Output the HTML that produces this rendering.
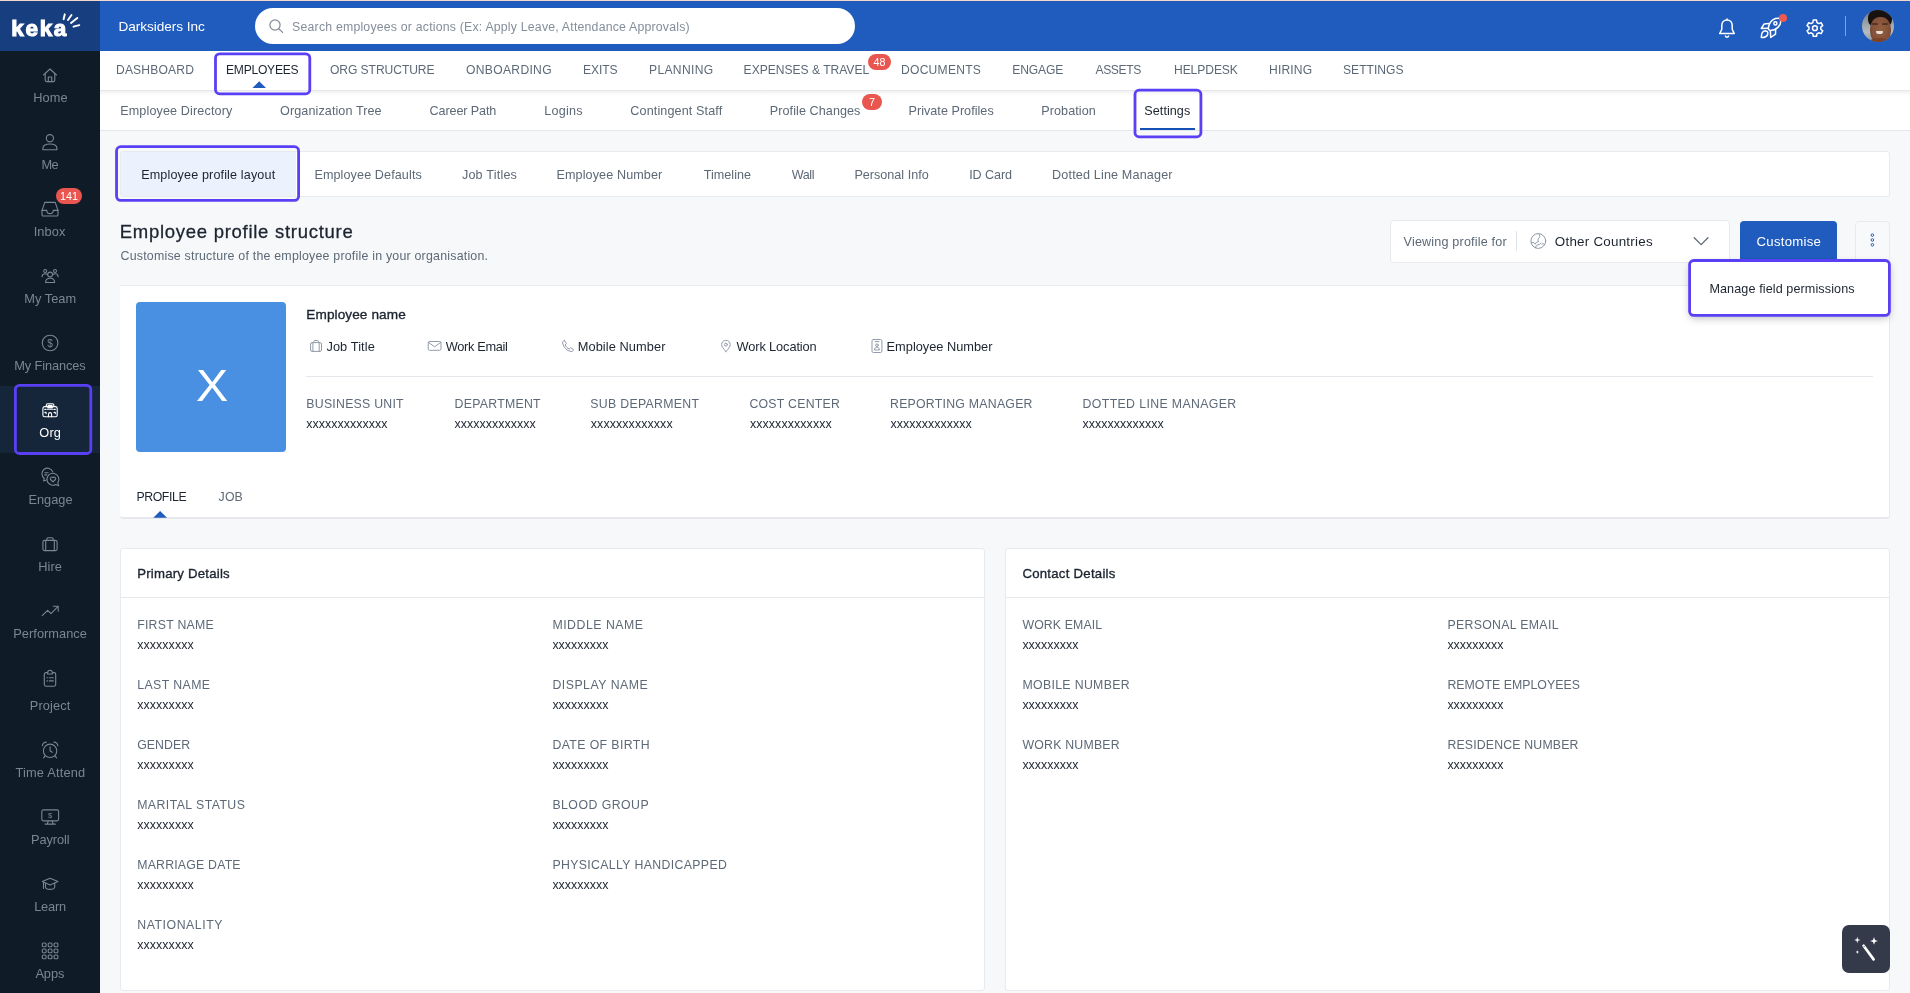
<!DOCTYPE html>
<html lang="en"><head><meta charset="utf-8"><title>Keka - Employee profile structure</title>
<style>
*{box-sizing:border-box;margin:0;padding:0}
html,body{width:1910px;height:993px;overflow:hidden;background:#f7f8fa;font-family:"Liberation Sans",sans-serif}
.a{position:absolute}
.t{position:absolute;white-space:nowrap;line-height:20px;height:20px}
svg{position:absolute;overflow:visible}
.card{position:absolute;background:#fff;border:1px solid #e8eaed}
.ring{position:absolute;border:2.5px solid #5a40f4;border-radius:5.5px}
.badge{position:absolute;background:#e9564f;border-radius:8px;color:#fff;font-size:10.8px;line-height:16px;height:16px;text-align:center;will-change:transform}
.si{fill:none;stroke:#7b8693;stroke-width:1.1;stroke-linecap:round;stroke-linejoin:round}
.wi{fill:none;stroke:#fff;stroke-width:1.5;stroke-linecap:round;stroke-linejoin:round}
.gi{fill:none;stroke:#919aa9;stroke-width:1;stroke-linecap:round;stroke-linejoin:round}
</style></head><body>
<!-- top bar -->
<div class="a" style="left:0;top:0;width:1910px;height:51px;background:#205cbe"></div>
<div class="a" style="left:0;top:0;width:100px;height:51px;background:#173f80"></div>
<div class="a" style="left:0;top:0;width:1910px;height:1px;background:#f3d6cc"></div>
<!-- sidebar -->
<div class="a" style="left:0;top:51px;width:100px;height:942px;background:#101b28"></div>
<div class="a" style="left:0;top:386px;width:100px;height:67px;background:#15263b"></div>
<!-- search -->
<div class="a" style="left:255px;top:8px;width:600px;height:36px;border-radius:18px;background:#fff"></div>
<!-- nav2 -->
<div class="a" style="left:100px;top:90px;width:1810px;height:41px;background:#fff;border-bottom:1px solid #e4e7eb"></div>
<!-- nav1 -->
<div class="a" style="left:100px;top:51px;width:1810px;height:39px;background:#fff"></div>
<div class="a" style="left:100px;top:90px;width:1810px;height:6px;background:linear-gradient(180deg,#e3e4e7 0,#e9eaec 16%,#f1f1f2 17%,#f5f5f6 40%,#f9f9f9 60%,#fcfcfc 80%,#fff 100%)"></div>
<!-- tabs card -->
<div class="card" style="left:120px;top:151px;width:1770px;height:46px;border-radius:3px"></div>
<div class="a" style="left:121px;top:152px;width:174.5px;height:44px;background:#ebf2fd"></div>
<!-- select -->
<div class="card" style="left:1390px;top:220px;width:340px;height:43px;border-radius:4px"></div>
<div class="a" style="left:1516px;top:231px;width:1px;height:20px;background:#e1e4e9"></div>
<!-- customise -->
<div class="a" style="left:1740px;top:221px;width:97px;height:41px;background:#205cbe;border-radius:4px"></div>
<!-- more btn -->
<div class="a" style="left:1855px;top:221px;width:35px;height:41px;border:1px solid #e8eaed;border-radius:4px;background:#f8f9fb"></div>
<!-- profile card -->
<div class="card" style="left:120px;top:285px;width:1770px;height:234px;border-left:0;border-bottom:2px solid #e6e8eb;border-radius:0 0 3px 3px"></div>
<div class="a" style="left:136px;top:302px;width:150px;height:150px;background:#4990e2;border-radius:4px"></div>
<div class="a" style="left:306px;top:376px;width:1567px;height:1px;background:#e4e7eb"></div>
<!-- details cards -->
<div class="card" style="left:120px;top:548px;width:865px;height:443px;border-radius:3px"></div>
<div class="a" style="left:121px;top:597px;width:863px;height:1px;background:#e6e8ec"></div>
<div class="card" style="left:1005px;top:548px;width:885px;height:443px;border-radius:3px"></div>
<div class="a" style="left:1006px;top:597px;width:883px;height:1px;background:#e6e8ec"></div>
<!-- popup -->
<div class="a" style="left:1690px;top:261px;width:199px;height:54px;background:#fff;border-radius:4px;box-shadow:0 3px 9px rgba(0,0,0,.28)"></div>
<!-- badges -->
<div class="badge" style="left:56px;top:188px;width:26px">141</div>
<div class="badge" style="left:867.5px;top:54px;width:23px">48</div>
<div class="badge" style="left:862px;top:94px;width:20px">7</div>
<!-- magic button -->
<div class="a" style="left:1842px;top:925px;width:48px;height:48px;background:#343a4a;border-radius:7px"></div>
<!-- settings underline -->
<div class="a" style="left:1140px;top:128px;width:55px;height:2px;background:#1450b5"></div>
<!--ICONS-->
<svg class="a" style="left:0;top:0;will-change:transform" width="1910" height="993" viewBox="0 0 1910 993">
<!-- logo rays -->
<g stroke="#fff" stroke-width="1.9" stroke-linecap="round" fill="none">
<path d="M64.8 14.3 L63.6 19.2"/><path d="M71.5 15 L68 20"/><path d="M77.3 17.9 L71 22.9"/><path d="M79.3 25.2 L73.5 26.7"/>
</g>
<!-- search icon -->
<g fill="none" stroke="#7f8995" stroke-width="1.2" stroke-linecap="round"><circle cx="275" cy="25" r="5.1"/><path d="M278.8 28.8 L282.6 32.4"/></g>
<!-- nav triangles -->
<path d="M252.4 88 L259.2 81.2 L266 88 Z" fill="#205cbe"/>
<path d="M153.3 517.8 L160.1 511 L167 517.8 Z" fill="#205cbe"/>
<!-- sidebar icons -->
<g class="si" transform="translate(43,68.4)"><path d="M0.5 6.6 L7 0.6 L13.5 6.6"/><path d="M2.2 5.4 V11.7 a1.5 1.5 0 0 0 1.5 1.5 H10.3 a1.5 1.5 0 0 0 1.5 -1.5 V5.4"/><path d="M5.3 13.2 V8.6 H8.7 V13.2"/></g>
<g class="si" transform="translate(42.3,134)"><circle cx="7.6" cy="4.2" r="3.6"/><path d="M0.6 15.8 v-1.4 c0-3 3-4.4 7-4.4 s7 1.4 7 4.4 v1.4 z"/></g>
<g class="si" transform="translate(41.4,201.8)"><path d="M0.6 8.6 L3.4 0.6 H13.8 L16.6 8.6 V13 a1.2 1.2 0 0 1 -1.2 1.2 H1.8 a1.2 1.2 0 0 1 -1.2 -1.2 Z"/><path d="M0.6 8.6 H5.4 a3.2 3.2 0 0 0 6.4 0 H16.6"/></g>
<g class="si" transform="translate(41.6,268.7)" stroke-width="0.95"><circle cx="8.5" cy="5.8" r="2.4"/><path d="M4 13.8 c0-2.9 2-4.2 4.5-4.2 s4.5 1.3 4.5 4.2 z"/><circle cx="3.6" cy="2.3" r="1.5"/><path d="M0.5 8 c0-1.9 1.2-3 3-3 c0.8 0 1.4 .2 1.9 .6"/><circle cx="13.4" cy="2.3" r="1.5"/><path d="M16.5 8 c0-1.9 -1.2-3 -3-3 c-0.8 0 -1.4 .2 -1.9 .6"/></g>
<g class="si" transform="translate(41.6,334.7)"><circle cx="8.5" cy="8.3" r="7.8"/></g>
<g class="si" transform="translate(42.3,403)" style="stroke:#fff" stroke-width="1"><rect x="0.6" y="3.6" width="14.3" height="10.2" rx="1.8"/><path d="M4 3.6 V2 a1.3 1.3 0 0 1 1.3-1.3 h4.9 a1.3 1.3 0 0 1 1.3 1.3 V3.6"/><path d="M5.8 2.4 H9.7 M5.4 4.6 H10.1 M5 6.2 H10.5"/><path d="M6.2 13.8 V11.2 a1.55 1.55 0 0 1 3.1 0 V13.8"/><path d="M2.5 6.4 h1.3 M2.5 9.4 h1.3 v1.2 M11.7 6.4 h1.3 M11.7 9.4 h1.3 v1.2"/></g>
<g class="si" transform="translate(41.2,468.3)" stroke-width="1"><path d="M5.2 11.6 L2.4 12.6 L3 10 A5.6 5.6 0 1 1 11.6 3.6"/><path d="M3.6 4.4 H7 M3.6 6.6 H5.6"/><path d="M14.6 16.2 L17.4 17.4 L16.6 14.4 A6 6 0 1 0 14.6 16.2 Z"/><path d="M11.8 13.6 L9.4 11.2 a1.5 1.5 0 0 1 2.4-1.8 a1.5 1.5 0 0 1 2.4 1.8 Z"/></g>
<g class="si" transform="translate(42.3,537)"><rect x="0.6" y="3.4" width="14.2" height="10.2" rx="1.6"/><path d="M4.6 3.4 V1.7 a1 1 0 0 1 1-1 h4.2 a1 1 0 0 1 1 1 V3.4"/><path d="M3.4 3.6 V13.4 M12 3.6 V13.4"/></g>
<g class="si" transform="translate(41.6,605.5)"><path d="M0.6 10.2 L6 4.8 L9.4 8.2 L16.2 1.2"/><path d="M11.6 0.8 H16.6 V5.8"/></g>
<g class="si" transform="translate(43.3,669.8)"><rect x="1" y="2.8" width="11.4" height="13.6" rx="1.6"/><path d="M4.4 4.2 V2.6 a2.3 2.1 0 0 1 4.6 0 V4.2 Z" fill="#101b28"/><path d="M3.6 8 H4.1 M6 8 H10 M3.6 11.1 H4.1 M6 11.1 H10"/></g>
<g class="si" transform="translate(41.6,741.3)"><circle cx="8.5" cy="9.5" r="6.7"/><path d="M8.5 5.6 V9.8 L10.8 11"/><path d="M0.8 4.4 A3.6 3.6 0 0 1 4.8 0.9"/><path d="M12.2 0.9 A3.6 3.6 0 0 1 16.2 4.4"/><path d="M3.6 14.6 L2 16.6 M13.4 14.6 L15 16.6"/></g>
<g class="si" transform="translate(41.2,809.3)"><rect x="0.6" y="0.6" width="16.8" height="11" rx="1.6"/><path d="M7 11.6 L6.2 14.4 M11 11.6 L11.8 14.4 M3.8 14.8 H14.2"/></g>
<g class="si" transform="translate(41.7,877.6)" stroke-width="1"><path d="M0.6 4 L8.4 0.6 L16.2 4 L8.4 7.4 Z"/><path d="M3.8 5.6 V9.4 c0 1.4 2 2.4 4.6 2.4 s4.6-1 4.6-2.4 V5.6"/><path d="M1.8 4.8 V10.8"/></g>
<g class="si" transform="translate(41.7,942.4)"><rect x="0.6" y="0.6" width="3.8" height="3.8" rx="1.1"/><rect x="6.5" y="0.6" width="3.8" height="3.8" rx="1.1"/><rect x="12.4" y="0.6" width="3.8" height="3.8" rx="1.1"/><rect x="0.6" y="6.6" width="3.8" height="3.8" rx="1.1"/><rect x="6.5" y="6.6" width="3.8" height="3.8" rx="1.1"/><rect x="12.4" y="6.6" width="3.8" height="3.8" rx="1.1"/><rect x="0.6" y="12.6" width="3.8" height="3.8" rx="1.1"/><rect x="6.5" y="12.6" width="3.8" height="3.8" rx="1.1"/><rect x="12.4" y="12.6" width="3.8" height="3.8" rx="1.1"/></g>
<text x="50.1" y="346.6" font-family="Liberation Sans, sans-serif" font-size="10" fill="#7b8693" text-anchor="middle">$</text>
<text x="50.2" y="818.4" font-family="Liberation Sans, sans-serif" font-size="7.5" fill="#7b8693" text-anchor="middle">$</text>
<!-- top right icons -->
<g class="wi" transform="translate(1718.8,18.2)"><path d="M8.2 1.8 c-3.1 0-5.2 2.4-5.2 5.6 v3.6 L0.9 15.4 h14.6 L13.4 11 v-3.6 c0-3.2-2.1-5.6-5.2-5.6z"/><path d="M8.2 0.7 V1.6"/><path d="M6.6 17.9 a1.7 1.7 0 0 0 3.2 0"/></g>
<g class="wi" stroke-width="1.45"><path d="M1779.9 18.4 C1775.5 17.9 1771.6 19.9 1769.7 23.6 C1768.6 25.6 1768.3 27.6 1768.5 29.2 L1769.9 30.5 C1772.6 30.6 1775.6 29.6 1777.9 27.4 C1780.6 24.9 1781.4 21.6 1779.9 18.4 Z"/><circle cx="1775.4" cy="23.4" r="1.55"/><path d="M1768.8 23.5 L1764.2 23.9 L1761.3 28.5 L1767.7 28.2"/><path d="M1770.4 31 L1770.7 37.5 L1775.5 34.2 L1775.6 29.8"/><path d="M1761.3 37.5 C1761.3 33.6 1763 30.8 1765.4 30.7 C1767.4 30.7 1768.2 32.6 1767.6 34.6 C1766.8 36.6 1764.4 37.6 1761.3 37.5 Z"/></g>
<g class="wi" transform="translate(1814.9,28.2)" stroke-width="1.45"><circle r="2.4"/><path d="M2.05 -5.64 L1.64 -8.08 L-1.64 -8.08 L-2.05 -5.64 L-3.86 -4.60 L-6.18 -5.47 L-7.82 -2.62 L-5.91 -1.04 L-5.91 1.04 L-7.82 2.62 L-6.18 5.47 L-3.86 4.60 L-2.05 5.64 L-1.64 8.08 L1.64 8.08 L2.05 5.64 L3.86 4.60 L6.18 5.47 L7.82 2.62 L5.91 1.04 L5.91 -1.04 L7.82 -2.62 L6.18 -5.47 L3.86 -4.60 Z"/></g>
<circle cx="1783" cy="18" r="4" fill="#ee5a52"/>
<path d="M1845.5 16 V36" stroke="#7fa0dd" stroke-width="1"/>
<!-- info icons -->
<g class="gi" transform="translate(310.1,340)"><rect x="0.5" y="2.6" width="10.9" height="8.8" rx="1.4"/><path d="M3.8 2.6 V1.4 a.9 .9 0 0 1 .9-.9 h2.8 a.9 .9 0 0 1 .9 .9 V2.6"/><path d="M2.8 2.8 V11.2 M9.1 2.8 V11.2"/></g>
<g class="gi" transform="translate(427.7,341)"><rect x="0.5" y="0.5" width="12.8" height="8.8" rx="1.4"/><path d="M0.8 1.4 L6.9 5.8 L13 1.4"/></g>
<g class="gi" transform="translate(562,340)"><path d="M2.6 0.6 L4.4 3.6 L3.2 5 C4 6.8 5.4 8.2 7.2 9 L8.6 7.8 L11.5 9.6 C11.3 11 10.2 11.7 9 11.5 C4.6 10.6 1.5 7.5 0.6 3 C0.4 1.8 1.2 .8 2.6 .6 Z"/></g>
<g class="gi" transform="translate(721,340)"><path d="M4.9 11.6 C2 8.4 0.6 6.4 0.6 4.6 a4.3 4.3 0 0 1 8.6 0 C9.2 6.4 7.8 8.4 4.9 11.6 Z"/><circle cx="4.9" cy="4.6" r="1.5"/></g>
<g class="gi" transform="translate(871.5,339)"><rect x="0.5" y="0.5" width="9.9" height="13" rx="1.4"/><path d="M3.6 2.6 H7.4"/><circle cx="5.45" cy="6.2" r="1.3"/><path d="M3 10.6 c0-1.6 1-2.4 2.45-2.4 s2.45 .8 2.45 2.4 z"/></g>
<!-- globe -->
<g class="gi" transform="translate(1538.3,241)" style="stroke:#8b95a3"><circle r="7.4"/><path d="M-6.6 1.6 c2-.4 2.8 .4 3.6 1.6 c.6-1.8 1.8-2.6 3.2-2.4 c-1-1.4-.6-3 1-4.4 c.6-1 .2-2.4 -.6-3.4"/><path d="M-2.8 6.6 c.2-1.4 1-2.4 2.4-2.8 c1.4-.2 2.4-.6 3 -1.800"/><path d="M3.6 3 c1-.4 1.8-.2 2.6 .4"/></g>
<!-- chevron -->
<path d="M1694.2 237.8 L1701.1 244.6 L1708 237.8" fill="none" stroke="#5d6977" stroke-width="1.3" stroke-linecap="round" stroke-linejoin="round"/>
<!-- dots -->
<g fill="none" stroke="#205cbe" stroke-width="1"><circle cx="1872.4" cy="235.1" r="1.3"/><circle cx="1872.4" cy="239.95" r="1.3"/><circle cx="1872.4" cy="244.8" r="1.3"/></g>
<!-- wand -->
<g fill="#fff" stroke="none"><path d="M1863.6 945.8 L1873.6 959.4" stroke="#fff" stroke-width="2.7" stroke-linecap="round"/><path d="M1874.0 937.1 l1.00 2.80 l2.80 1.00 l-2.80 1.00 l-1.00 2.80 l-1.00 -2.80 l-2.80 -1.00 l2.80 -1.00 z"/><path d="M1857.3 936.8 l0.70 2.50 l2.50 0.70 l-2.50 0.70 l-0.70 2.50 l-0.70 -2.50 l-2.50 -0.70 l2.50 -0.70 z"/><path d="M1857.3 950.3 l0.50 1.30 l1.30 0.50 l-1.30 0.50 l-0.50 1.30 l-0.50 -1.30 l-1.30 -0.50 l1.30 -0.50 z"/><circle cx="1864.1" cy="946.5" r="0.55" fill="#353b4b"/></g>
</svg>
<!-- avatar -->
<div class="a" style="left:1862px;top:10px;width:32px;height:32px;border-radius:50%;overflow:hidden;background:linear-gradient(180deg,#6f767c 0%,#9aa2a8 40%,#b4bcc1 70%,#8d9499 100%)">
 <div class="a" style="left:6px;top:-2px;width:24px;height:20px;border-radius:50% 50% 40% 40%;background:#17120f"></div>
 <div class="a" style="left:7.5px;top:6.5px;width:21px;height:27px;border-radius:45% 45% 48% 48%;background:radial-gradient(ellipse at 50% 45%,#93603f 0%,#84523a 55%,#5e3726 100%)"></div>
 <div class="a" style="left:10px;top:12.6px;width:6px;height:2px;border-radius:1px;background:#4a2c1f;opacity:.8"></div>
 <div class="a" style="left:19.5px;top:12.6px;width:6px;height:2px;border-radius:1px;background:#4a2c1f;opacity:.8"></div>
 <div class="a" style="left:14px;top:21.4px;width:7px;height:2.8px;border-radius:1px 1px 5px 5px;background:#e9ddd6"></div>
 <div class="a" style="left:6px;top:27.5px;width:24px;height:10px;border-radius:50% 50% 0 0;background:#7a4229"></div>
</div>
<div class="a" style="left:0;top:0;width:1910px;height:993px;will-change:transform"><span class="t" id="t0" style="left:11.2px;top:19.00px;font-size:22.5px;color:#fff;font-weight:700;letter-spacing:1.713px;-webkit-text-stroke:1.1px #fff;">keka</span>
<span class="t" id="t1" style="left:118.4px;top:17.00px;font-size:13.6px;color:#fff;letter-spacing:-0.044px;">Darksiders Inc</span>
<span class="t" id="t2" style="left:292.1px;top:17.00px;font-size:12.3px;color:#848e9b;letter-spacing:0.203px;">Search employees or actions (Ex: Apply Leave, Attendance Approvals)</span>
<span class="t" id="t3" style="left:116.0px;top:60.00px;font-size:12.1px;color:#5d6977;letter-spacing:0.161px;">DASHBOARD</span>
<span class="t" id="t4" style="left:226.0px;top:60.00px;font-size:12.1px;color:#1c2430;letter-spacing:-0.251px;">EMPLOYEES</span>
<span class="t" id="t5" style="left:330.0px;top:60.00px;font-size:12.1px;color:#5d6977;letter-spacing:-0.074px;">ORG STRUCTURE</span>
<span class="t" id="t6" style="left:466.0px;top:60.00px;font-size:12.1px;color:#5d6977;letter-spacing:0.327px;">ONBOARDING</span>
<span class="t" id="t7" style="left:583.0px;top:60.00px;font-size:12.1px;color:#5d6977;letter-spacing:-0.088px;">EXITS</span>
<span class="t" id="t8" style="left:649.0px;top:60.00px;font-size:12.1px;color:#5d6977;letter-spacing:0.325px;">PLANNING</span>
<span class="t" id="t9" style="left:743.6px;top:60.00px;font-size:12.1px;color:#5d6977;letter-spacing:-0.020px;">EXPENSES &amp; TRAVEL</span>
<span class="t" id="t10" style="left:901.0px;top:60.00px;font-size:12.1px;color:#5d6977;letter-spacing:0.245px;">DOCUMENTS</span>
<span class="t" id="t11" style="left:1012.2px;top:60.00px;font-size:12.1px;color:#5d6977;letter-spacing:-0.100px;">ENGAGE</span>
<span class="t" id="t12" style="left:1095.5px;top:60.00px;font-size:12.1px;color:#5d6977;letter-spacing:-0.382px;">ASSETS</span>
<span class="t" id="t13" style="left:1174.0px;top:60.00px;font-size:12.1px;color:#5d6977;letter-spacing:-0.090px;">HELPDESK</span>
<span class="t" id="t14" style="left:1269.0px;top:60.00px;font-size:12.1px;color:#5d6977;letter-spacing:0.154px;">HIRING</span>
<span class="t" id="t15" style="left:1343.0px;top:60.00px;font-size:12.1px;color:#5d6977;letter-spacing:0.017px;">SETTINGS</span>
<span class="t" id="t16" style="left:120.2px;top:101.00px;font-size:12.6px;color:#5d6977;letter-spacing:0.131px;">Employee Directory</span>
<span class="t" id="t17" style="left:280.1px;top:101.00px;font-size:12.6px;color:#5d6977;letter-spacing:0.087px;">Organization Tree</span>
<span class="t" id="t18" style="left:429.6px;top:101.00px;font-size:12.6px;color:#5d6977;letter-spacing:-0.116px;">Career Path</span>
<span class="t" id="t19" style="left:544.3px;top:101.00px;font-size:12.6px;color:#5d6977;letter-spacing:0.206px;">Logins</span>
<span class="t" id="t20" style="left:630.3px;top:101.00px;font-size:12.6px;color:#5d6977;letter-spacing:0.123px;">Contingent Staff</span>
<span class="t" id="t21" style="left:769.8px;top:101.00px;font-size:12.6px;color:#5d6977;letter-spacing:0.071px;">Profile Changes</span>
<span class="t" id="t22" style="left:908.5px;top:101.00px;font-size:12.6px;color:#5d6977;letter-spacing:0.033px;">Private Profiles</span>
<span class="t" id="t23" style="left:1041.3px;top:101.00px;font-size:12.6px;color:#5d6977;letter-spacing:0.071px;">Probation</span>
<span class="t" id="t24" style="left:1144.3px;top:101.00px;font-size:12.6px;color:#1c2430;letter-spacing:0.060px;">Settings</span>
<span class="t" id="t25" style="left:141.2px;top:165.00px;font-size:12.6px;color:#1c2430;letter-spacing:0.138px;">Employee profile layout</span>
<span class="t" id="t26" style="left:314.4px;top:165.00px;font-size:12.6px;color:#5d6977;letter-spacing:0.106px;">Employee Defaults</span>
<span class="t" id="t27" style="left:461.9px;top:165.00px;font-size:12.6px;color:#5d6977;letter-spacing:0.200px;">Job Titles</span>
<span class="t" id="t28" style="left:556.5px;top:165.00px;font-size:12.6px;color:#5d6977;letter-spacing:0.104px;">Employee Number</span>
<span class="t" id="t29" style="left:703.7px;top:165.00px;font-size:12.6px;color:#5d6977;letter-spacing:0.036px;">Timeline</span>
<span class="t" id="t30" style="left:791.7px;top:165.00px;font-size:12.6px;color:#5d6977;letter-spacing:-0.402px;">Wall</span>
<span class="t" id="t31" style="left:854.4px;top:165.00px;font-size:12.6px;color:#5d6977;letter-spacing:0.007px;">Personal Info</span>
<span class="t" id="t32" style="left:969.2px;top:165.00px;font-size:12.6px;color:#5d6977;letter-spacing:-0.082px;">ID Card</span>
<span class="t" id="t33" style="left:1052.1px;top:165.00px;font-size:12.6px;color:#5d6977;letter-spacing:0.154px;">Dotted Line Manager</span>
<span class="t" id="t34" style="left:119.7px;top:222.00px;font-size:18.5px;color:#1c2430;letter-spacing:0.727px;-webkit-text-stroke:0.3px #1c2430;">Employee profile structure</span>
<span class="t" id="t35" style="left:120.5px;top:246.00px;font-size:12.4px;color:#5d6977;letter-spacing:0.211px;">Customise structure of the employee profile in your organisation.</span>
<span class="t" id="t36" style="left:1403.6px;top:232.00px;font-size:12.6px;color:#5d6977;letter-spacing:0.173px;">Viewing profile for</span>
<span class="t" id="t37" style="left:1554.8px;top:232.00px;font-size:13.4px;color:#1c2430;letter-spacing:0.233px;">Other Countries</span>
<span class="t" id="t38" style="left:1756.5px;top:232.00px;font-size:13.2px;color:#fff;letter-spacing:0.263px;">Customise</span>
<span class="t" id="t39" style="left:1709.4px;top:279.00px;font-size:12.6px;color:#1c2430;letter-spacing:0.104px;">Manage field permissions</span>
<span class="t" id="t40" style="left:196.3px;top:376.00px;font-size:43.9px;color:#fff;letter-spacing:0.000px;transform:scaleX(1.1);transform-origin:0 0;">X</span>
<span class="t" id="t41" style="left:306.3px;top:305.00px;font-size:13.6px;color:#1c2430;letter-spacing:0.097px;-webkit-text-stroke:0.35px #1c2430;">Employee name</span>
<span class="t" id="t42" style="left:326.4px;top:337.00px;font-size:12.8px;color:#1c2430;letter-spacing:0.091px;">Job Title</span>
<span class="t" id="t43" style="left:445.7px;top:337.00px;font-size:12.8px;color:#1c2430;letter-spacing:-0.334px;">Work Email</span>
<span class="t" id="t44" style="left:577.7px;top:337.00px;font-size:12.8px;color:#1c2430;letter-spacing:0.085px;">Mobile Number</span>
<span class="t" id="t45" style="left:736.5px;top:337.00px;font-size:12.8px;color:#1c2430;letter-spacing:-0.114px;">Work Location</span>
<span class="t" id="t46" style="left:886.6px;top:337.00px;font-size:12.8px;color:#1c2430;letter-spacing:-0.009px;">Employee Number</span>
<span class="t" id="t47" style="left:306.3px;top:394.00px;font-size:12.3px;color:#5d6977;letter-spacing:0.251px;">BUSINESS UNIT</span>
<span class="t" id="t48" style="left:306.3px;top:414.00px;font-size:12.4px;color:#1c2430;letter-spacing:0.048px;">xxxxxxxxxxxxx</span>
<span class="t" id="t49" style="left:454.6px;top:394.00px;font-size:12.3px;color:#5d6977;letter-spacing:0.267px;">DEPARTMENT</span>
<span class="t" id="t50" style="left:454.6px;top:414.00px;font-size:12.4px;color:#1c2430;letter-spacing:0.048px;">xxxxxxxxxxxxx</span>
<span class="t" id="t51" style="left:590.3px;top:394.00px;font-size:12.3px;color:#5d6977;letter-spacing:0.308px;">SUB DEPARMENT</span>
<span class="t" id="t52" style="left:590.8px;top:414.00px;font-size:12.4px;color:#1c2430;letter-spacing:0.104px;">xxxxxxxxxxxxx</span>
<span class="t" id="t53" style="left:749.4px;top:394.00px;font-size:12.3px;color:#5d6977;letter-spacing:0.258px;">COST CENTER</span>
<span class="t" id="t54" style="left:749.9px;top:414.00px;font-size:12.4px;color:#1c2430;letter-spacing:0.104px;">xxxxxxxxxxxxx</span>
<span class="t" id="t55" style="left:890.0px;top:394.00px;font-size:12.3px;color:#5d6977;letter-spacing:0.251px;">REPORTING MANAGER</span>
<span class="t" id="t56" style="left:890.5px;top:414.00px;font-size:12.4px;color:#1c2430;letter-spacing:0.048px;">xxxxxxxxxxxxx</span>
<span class="t" id="t57" style="left:1082.6px;top:394.00px;font-size:12.3px;color:#5d6977;letter-spacing:0.372px;">DOTTED LINE MANAGER</span>
<span class="t" id="t58" style="left:1082.6px;top:414.00px;font-size:12.4px;color:#1c2430;letter-spacing:0.048px;">xxxxxxxxxxxxx</span>
<span class="t" id="t59" style="left:136.4px;top:487.00px;font-size:12.3px;color:#1c2430;letter-spacing:-0.404px;">PROFILE</span>
<span class="t" id="t60" style="left:218.6px;top:487.00px;font-size:12.3px;color:#5d6977;letter-spacing:0.139px;">JOB</span>
<span class="t" id="t61" style="left:137.2px;top:564.00px;font-size:13.2px;color:#1c2430;letter-spacing:0.220px;-webkit-text-stroke:0.35px #1c2430;">Primary Details</span>
<span class="t" id="t62" style="left:1022.4px;top:564.00px;font-size:13.2px;color:#1c2430;letter-spacing:0.254px;-webkit-text-stroke:0.35px #1c2430;">Contact Details</span>
<span class="t" id="t63" style="left:137.2px;top:615.00px;font-size:12.3px;color:#5d6977;letter-spacing:0.249px;">FIRST NAME</span>
<span class="t" id="t64" style="left:137.2px;top:635.00px;font-size:12.4px;color:#1c2430;letter-spacing:0.091px;">xxxxxxxxx</span>
<span class="t" id="t65" style="left:137.2px;top:675.00px;font-size:12.3px;color:#5d6977;letter-spacing:0.422px;">LAST NAME</span>
<span class="t" id="t66" style="left:137.2px;top:695.00px;font-size:12.4px;color:#1c2430;letter-spacing:0.091px;">xxxxxxxxx</span>
<span class="t" id="t67" style="left:137.2px;top:735.00px;font-size:12.3px;color:#5d6977;letter-spacing:0.055px;">GENDER</span>
<span class="t" id="t68" style="left:137.2px;top:755.00px;font-size:12.4px;color:#1c2430;letter-spacing:0.091px;">xxxxxxxxx</span>
<span class="t" id="t69" style="left:137.2px;top:795.00px;font-size:12.3px;color:#5d6977;letter-spacing:0.434px;">MARITAL STATUS</span>
<span class="t" id="t70" style="left:137.2px;top:815.00px;font-size:12.4px;color:#1c2430;letter-spacing:0.091px;">xxxxxxxxx</span>
<span class="t" id="t71" style="left:137.2px;top:855.00px;font-size:12.3px;color:#5d6977;letter-spacing:0.208px;">MARRIAGE DATE</span>
<span class="t" id="t72" style="left:137.2px;top:875.00px;font-size:12.4px;color:#1c2430;letter-spacing:0.091px;">xxxxxxxxx</span>
<span class="t" id="t73" style="left:137.2px;top:915.00px;font-size:12.3px;color:#5d6977;letter-spacing:0.559px;">NATIONALITY</span>
<span class="t" id="t74" style="left:137.2px;top:935.00px;font-size:12.4px;color:#1c2430;letter-spacing:0.091px;">xxxxxxxxx</span>
<span class="t" id="t75" style="left:552.4px;top:615.00px;font-size:12.3px;color:#5d6977;letter-spacing:0.519px;">MIDDLE NAME</span>
<span class="t" id="t76" style="left:552.4px;top:635.00px;font-size:12.4px;color:#1c2430;letter-spacing:0.027px;">xxxxxxxxx</span>
<span class="t" id="t77" style="left:552.4px;top:675.00px;font-size:12.3px;color:#5d6977;letter-spacing:0.503px;">DISPLAY NAME</span>
<span class="t" id="t78" style="left:552.4px;top:695.00px;font-size:12.4px;color:#1c2430;letter-spacing:0.027px;">xxxxxxxxx</span>
<span class="t" id="t79" style="left:552.4px;top:735.00px;font-size:12.3px;color:#5d6977;letter-spacing:0.394px;">DATE OF BIRTH</span>
<span class="t" id="t80" style="left:552.4px;top:755.00px;font-size:12.4px;color:#1c2430;letter-spacing:0.027px;">xxxxxxxxx</span>
<span class="t" id="t81" style="left:552.4px;top:795.00px;font-size:12.3px;color:#5d6977;letter-spacing:0.464px;">BLOOD GROUP</span>
<span class="t" id="t82" style="left:552.4px;top:815.00px;font-size:12.4px;color:#1c2430;letter-spacing:0.027px;">xxxxxxxxx</span>
<span class="t" id="t83" style="left:552.4px;top:855.00px;font-size:12.3px;color:#5d6977;letter-spacing:0.357px;">PHYSICALLY HANDICAPPED</span>
<span class="t" id="t84" style="left:552.4px;top:875.00px;font-size:12.4px;color:#1c2430;letter-spacing:0.027px;">xxxxxxxxx</span>
<span class="t" id="t85" style="left:1022.4px;top:615.00px;font-size:12.3px;color:#5d6977;letter-spacing:0.130px;">WORK EMAIL</span>
<span class="t" id="t86" style="left:1022.4px;top:635.00px;font-size:12.4px;color:#1c2430;letter-spacing:0.027px;">xxxxxxxxx</span>
<span class="t" id="t87" style="left:1022.4px;top:675.00px;font-size:12.3px;color:#5d6977;letter-spacing:0.343px;">MOBILE NUMBER</span>
<span class="t" id="t88" style="left:1022.4px;top:695.00px;font-size:12.4px;color:#1c2430;letter-spacing:0.027px;">xxxxxxxxx</span>
<span class="t" id="t89" style="left:1022.4px;top:735.00px;font-size:12.3px;color:#5d6977;letter-spacing:0.233px;">WORK NUMBER</span>
<span class="t" id="t90" style="left:1022.4px;top:755.00px;font-size:12.4px;color:#1c2430;letter-spacing:0.027px;">xxxxxxxxx</span>
<span class="t" id="t91" style="left:1447.4px;top:615.00px;font-size:12.3px;color:#5d6977;letter-spacing:0.327px;">PERSONAL EMAIL</span>
<span class="t" id="t92" style="left:1447.4px;top:635.00px;font-size:12.4px;color:#1c2430;letter-spacing:0.027px;">xxxxxxxxx</span>
<span class="t" id="t93" style="left:1447.4px;top:675.00px;font-size:12.3px;color:#5d6977;letter-spacing:0.040px;">REMOTE EMPLOYEES</span>
<span class="t" id="t94" style="left:1447.4px;top:695.00px;font-size:12.4px;color:#1c2430;letter-spacing:0.027px;">xxxxxxxxx</span>
<span class="t" id="t95" style="left:1447.4px;top:735.00px;font-size:12.3px;color:#5d6977;letter-spacing:0.176px;">RESIDENCE NUMBER</span>
<span class="t" id="t96" style="left:1447.4px;top:755.00px;font-size:12.4px;color:#1c2430;letter-spacing:0.027px;">xxxxxxxxx</span>
<span class="t" id="t97" style="left:33.2px;top:88.00px;font-size:12.8px;color:#7b8693;letter-spacing:0.086px;">Home</span>
<span class="t" id="t98" style="left:41.4px;top:155.00px;font-size:12.8px;color:#7b8693;letter-spacing:-0.661px;">Me</span>
<span class="t" id="t99" style="left:33.7px;top:222.00px;font-size:12.8px;color:#7b8693;letter-spacing:0.072px;">Inbox</span>
<span class="t" id="t100" style="left:24.3px;top:289.00px;font-size:12.8px;color:#7b8693;letter-spacing:0.019px;">My Team</span>
<span class="t" id="t101" style="left:14.2px;top:356.00px;font-size:12.8px;color:#7b8693;letter-spacing:-0.103px;">My Finances</span>
<span class="t" id="t102" style="left:39.3px;top:423.00px;font-size:12.8px;color:#fff;letter-spacing:0.178px;">Org</span>
<span class="t" id="t103" style="left:28.5px;top:490.00px;font-size:12.8px;color:#7b8693;letter-spacing:-0.025px;">Engage</span>
<span class="t" id="t104" style="left:38.3px;top:557.00px;font-size:12.8px;color:#7b8693;letter-spacing:0.007px;">Hire</span>
<span class="t" id="t105" style="left:13.3px;top:624.00px;font-size:12.8px;color:#7b8693;letter-spacing:0.033px;">Performance</span>
<span class="t" id="t106" style="left:29.8px;top:696.00px;font-size:12.8px;color:#7b8693;letter-spacing:0.105px;">Project</span>
<span class="t" id="t107" style="left:15.4px;top:763.00px;font-size:12.8px;color:#7b8693;letter-spacing:0.199px;">Time Attend</span>
<span class="t" id="t108" style="left:31.0px;top:830.00px;font-size:12.8px;color:#7b8693;letter-spacing:-0.087px;">Payroll</span>
<span class="t" id="t109" style="left:34.2px;top:897.00px;font-size:12.8px;color:#7b8693;letter-spacing:-0.209px;">Learn</span>
<span class="t" id="t110" style="left:35.4px;top:964.00px;font-size:12.8px;color:#7b8693;letter-spacing:-0.079px;">Apps</span></div>
<!-- rings -->
<svg class="a" style="left:0;top:0" width="1910" height="993" viewBox="0 0 1910 993"><g fill="none" stroke="#5a40f4" stroke-width="2.8"><rect x="215.50" y="53.80" width="94.30" height="40.00" rx="4.1"/><rect x="1135.00" y="90.20" width="65.90" height="46.60" rx="4.1"/><rect x="116.55" y="146.70" width="182.05" height="53.70" rx="4.1"/><rect x="15.40" y="385.40" width="75.40" height="68.10" rx="4.1"/><rect x="1689.60" y="260.50" width="199.80" height="54.90" rx="4.1"/></g></svg>
</body></html>
